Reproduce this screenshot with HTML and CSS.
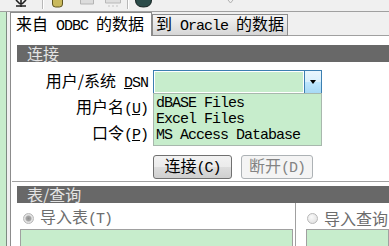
FILE: index.html
```html
<!DOCTYPE html>
<html lang="zh-CN">
<head>
  <meta charset="UTF-8">
  <title>获取外部数据</title>
  <link rel="stylesheet" href="styles.css">
</head>
<body>

<div class="toolbar">
  <svg width="389" height="11" viewBox="0 0 389 11">
    <path d="M16 0l4 4M26 0l-4 4M21 0v7M16 6h10" stroke="#222" stroke-width="1.6" fill="none"/>
    <path d="M42.5 0v9" stroke="#b8b8b8"/>
    <path d="M43.5 0v9" stroke="#fff"/>
    <path d="M52.5 0v4q0 3 3 3h4q3 0 3-3V0" fill="#c9b95c" stroke="#5f5520"/>
    <path d="M80.5 0v4h13V0" fill="#dcdcdc" stroke="#b4b4b4"/>
    <path d="M105.5 0v3h15V0" fill="#dedede" stroke="#b8b8b8"/>
    <path d="M108 6h2M112 6h2M116 6h2" stroke="#c4c4c4"/>
    <path d="M127.5 0v9" stroke="#b8b8b8"/>
    <path d="M128.5 0v9" stroke="#fff"/>
    <path d="M135.5 0q0 7 8 7t8-7" fill="#2c4c4a" stroke="#13201f"/>
    <path d="M228 0l2.5 3 2.5-3" stroke="#b0b0b0" fill="none"/>
  </svg>
</div>

<div class="main">
  <div class="side"></div>
  <div class="tabctl">
    <div class="tabs">
      <div class="tab tab-active"><span>来自<span class="en"> ODBC </span>的数据</span></div>
      <div class="tab tab-other"><span>到<span class="en"> Oracle </span>的数据</span></div>
      <div class="tab-rest"></div>
    </div>

    <div class="page">
      <div class="bar">连接</div>

      <div class="form">
        <div class="lbl"><span>用户/系统<span class="en"> <u>D</u>SN</span></span></div>
        <div class="combo">
          <div class="combo-field"></div>
          <div class="combo-btn"><span class="arrow"></span></div>
          <div class="combo-list">
            <div class="item en">dBASE Files</div>
            <div class="item en">Excel Files</div>
            <div class="item en">MS Access Database</div>
          </div>
        </div>

        <div class="lbl"><span>用户名<span class="en">(<u>U</u>)</span></span></div>
        <div class="field"></div>

        <div class="lbl"><span>口令<span class="en">(<u>P</u>)</span></span></div>
        <div class="field"></div>

        <div class="btns">
          <button class="btn btn-connect">连接<span class="en">(C)</span></button>
          <button class="btn btn-off" disabled>断开<span class="en">(D)</span></button>
        </div>
      </div>

      <div class="sep"></div>

      <div class="bar">表/查询</div>

      <div class="split">
        <div class="pane pane-left">
          <div class="opt"><span class="radio radio-on"></span><span>导入表<span class="en">(T)</span></span></div>
          <div class="box"></div>
        </div>
        <div class="pane pane-right">
          <div class="opt"><span class="radio"></span><span>导入查询</span></div>
          <div class="box"></div>
        </div>
      </div>
    </div>
  </div>
</div>

</body>
</html>
```

FILE: styles.css
```css
body {
  margin: 0;
  width: 389px;
  height: 246px;
  overflow: hidden;
  background: #f0f0f0;
  font-family: "Noto Sans CJK SC", sans-serif;
  font-size: 16px;
  line-height: 16px;
  color: #000;
}

.en {
  font-family: "Liberation Mono", "Noto Sans CJK SC", monospace;
  font-size: 15px;
  letter-spacing: -1px;
  white-space: pre;
}

.toolbar {
  height: 11px;
  border-bottom: 1px solid #a0a0a0;
}

.toolbar svg {
  display: block;
}

.main {
  display: flex;
  height: 234px;
}

.side {
  width: 6px;
  background: #c7edcc;
  border-right: 1px solid #7d8c82;
}

.tabctl {
  flex: 1;
  display: flex;
  flex-direction: column;
  margin-left: 3px;
}

/* tabs */
.tabs {
  display: flex;
  align-items: flex-end;
  height: 24px;
}

.tab {
  display: flex;
  align-items: center;
  box-sizing: border-box;
  border: 1px solid #8c8c8c;
  white-space: nowrap;
}

.tab-active {
  width: 142px;
  height: 24px;
  border-bottom: none;
  background: #fff;
  padding-left: 5px;
}

.tab-other {
  width: 136px;
  height: 22px;
  padding-left: 3px;
  background: linear-gradient(#f4f4f4, #e6e6e6 50%, #d6d6d6);
}

.tab-rest {
  flex: 1;
  border-bottom: 1px solid #a0a0a0;
}

.page {
  flex: 1;
  background: #fff;
  border-left: 1px solid #8c8c8c;
  padding-top: 9px;
}

.bar {
  margin-left: 6px;
  height: 17px;
  line-height: 17px;
  padding-left: 10px;
  background: #686868;
  color: #e4e4e4;
}

/* connection form */
.form {
  display: grid;
  grid-template-columns: 137px 169px;
  grid-auto-rows: 24px;
  column-gap: 5px;
  row-gap: 2px;
  margin-top: 8px;
}

.lbl {
  display: flex;
  align-items: center;
  justify-content: flex-end;
  white-space: nowrap;
}

.combo {
  position: relative;
  display: flex;
  box-sizing: border-box;
  border: 1px solid #3c7fb1;
  z-index: 1;
}

.combo-field {
  flex: 1;
  background: #c7edcc;
  border: 1px solid #fff;
}

.combo-btn {
  width: 16px;
  display: flex;
  align-items: center;
  justify-content: center;
  border-left: 1px solid #3c7fb1;
  background: linear-gradient(#eaf6fd, #d9f0fc 50%, #bee6fd 51%, #a7d9f5);
}

.arrow {
  width: 0;
  height: 0;
  border-left: 3.5px solid transparent;
  border-right: 3.5px solid transparent;
  border-top: 4px solid #000;
}

.combo-list {
  position: absolute;
  top: 100%;
  left: -1px;
  right: -1px;
  height: 53px;
  box-sizing: border-box;
  padding-top: 2px;
  background: #c7edcc;
  border: 1px solid #a8b8ad;
}

.item {
  padding-left: 2px;
  height: 16px;
  line-height: 16px;
}

.field {
  box-sizing: border-box;
  border: 1px solid #abadb3;
  background: #c7edcc;
}

.btns {
  grid-column: 2;
  display: flex;
  gap: 9px;
  margin-top: 7px;
}

.btn {
  height: 24px;
  box-sizing: border-box;
  padding: 0;
  font-family: inherit;
  font-size: 16px;
  line-height: 16px;
  border: 1px solid #707070;
  border-radius: 3px;
  background: linear-gradient(#f2f2f2, #ebebeb 50%, #dddddd 51%, #cfcfcf);
  color: #000;
}

.btn-connect {
  width: 79px;
}

.btn-off {
  width: 72px;
  border-color: #adb2b5;
  background: #f4f4f4;
  color: #838383;
}

.sep {
  margin: 9px 0 3px 1px;
  border-top: 1px solid #a0a0a0;
  border-bottom: 1px solid #fff;
}

/* tables / queries */
.split {
  display: grid;
  grid-template-columns: 285px 1fr;
  height: 36px;
}

.pane {
  padding-top: 8px;
}

.pane-left {
  border-right: 1px solid #a0a0a0;
  padding-left: 12px;
}

.pane-right {
  padding-left: 11px;
}

.opt {
  display: flex;
  align-items: center;
  gap: 6px;
  height: 14px;
  color: #6d6d6d;
  white-space: nowrap;
}

.radio {
  width: 11px;
  height: 11px;
  box-sizing: border-box;
  border-radius: 50%;
  border: 1px solid #b8b8b8;
  background: radial-gradient(circle at 40% 35%, #fafafa, #dcdcdc);
}

.radio-on {
  background: radial-gradient(circle, #8e8e8e 0, #a8a8a8 2.5px, #e4e4e4 3.5px, #d8d8d8);
}

.box {
  margin-top: 4px;
  height: 20px;
  background: #c7edcc;
  border: 1px solid #a0a0a0;
}

.pane-left .box {
  margin-left: -3px;
  margin-right: 2px;
}

.pane-right .box {
  margin-left: -1px;
}
```
